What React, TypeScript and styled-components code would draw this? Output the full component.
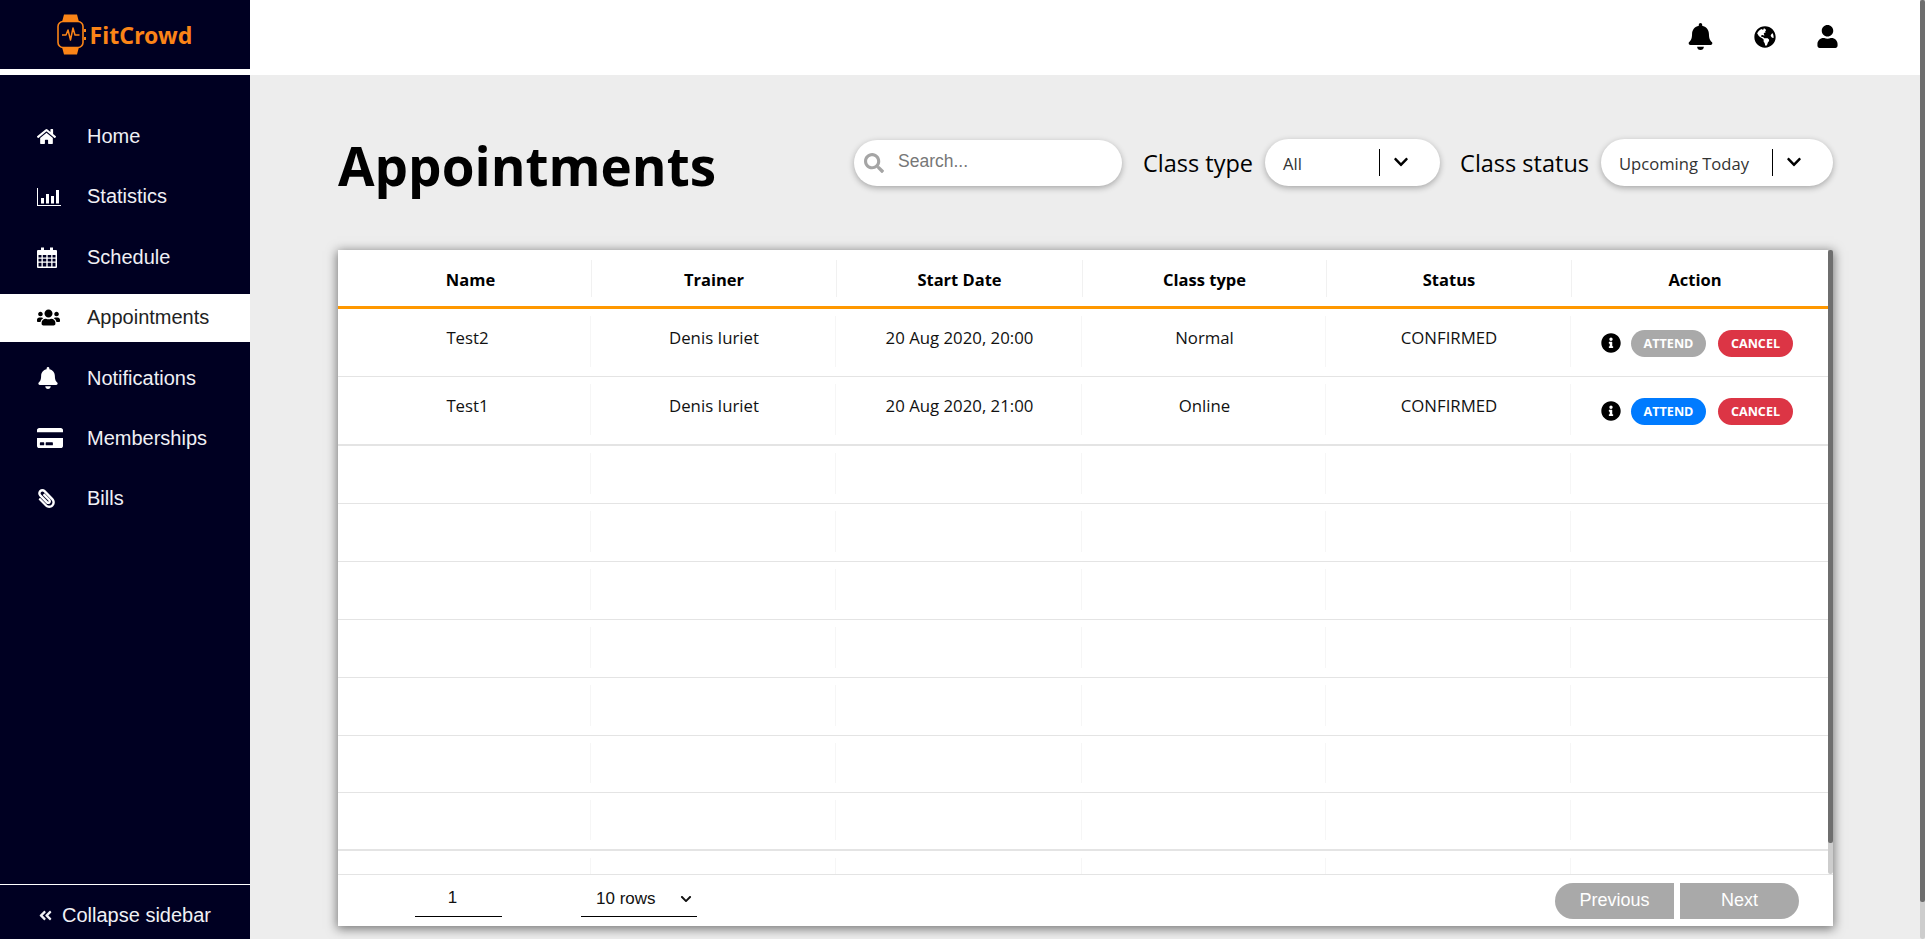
import React from "react";
import styled, { createGlobalStyle } from "styled-components";
import {
	FaHome,
	FaUsers,
	FaBell,
	FaCreditCard,
	FaPaperclip,
	FaGlobeAmericas,
	FaUser,
	FaSearch,
	FaChevronDown,
	FaAngleDoubleLeft,
	FaInfoCircle,
} from "react-icons/fa";

const GlobalStyle = createGlobalStyle`
	* { box-sizing: border-box; }
	html { scrollbar-width: none; }
	body {
		margin: 0;
		background: #ededed;
		font-family: "Open Sans", sans-serif;
		color: #000;
	}
`;

// **LAYOUT
const Page = styled.div`
	display: flex;
	align-items: flex-start;
	min-height: 977px;
	padding-right: 5px;
`;
const Content = styled.div`
	flex: 1;
	min-width: 0;
`;
const Main = styled.main`
	padding: 64px 87px 51px 88px;
`;

// the thin always-visible scrollbars of the page and the table
const ScrollTrack = styled.div<{ $page?: boolean }>`
	position: ${(p) => (p.$page ? "fixed" : "absolute")};
	top: 0;
	right: 0;
	width: 5px;
	height: ${(p) => (p.$page ? "100vh" : "624px")};
	background: #cdcdcd;
	border-radius: 0 0 3px 3px;
`;
const ScrollThumb = styled.div<{ $height: number }>`
	height: ${(p) => p.$height}px;
	background: #6e6e6e;
	border-radius: 2px;
`;

// **SIDEBAR
const Sidebar = styled.aside`
	position: sticky;
	top: 0;
	width: 250px;
	height: 100vh;
	flex: none;
	display: flex;
	flex-direction: column;
	background: #000022;
`;
const LogoBar = styled.div`
	height: 75px;
	flex: none;
	border-bottom: 6px solid #fff;
	display: flex;
	align-items: center;
	justify-content: center;
	gap: 3px;
`;
const LogoText = styled.span`
	padding-top: 1px;
	font-family: "Noto Sans", sans-serif;
	font-weight: 700;
	font-size: 23px;
	line-height: 1;
	letter-spacing: 0.1px;
	color: #fb8417;
`;
const SideNav = styled.nav`
	flex: 1;
	display: flex;
	flex-direction: column;
	gap: 12.4px;
	padding-top: 37.5px;
`;
const SideItem = styled.a<{ $active?: boolean }>`
	height: 48px;
	display: flex;
	align-items: center;
	padding-left: 37px;
	font-family: "Liberation Sans", sans-serif;
	font-size: 20px;
	color: ${(p) => (p.$active ? "#222" : "#f0f0f5")};
	background: ${(p) => (p.$active ? "#fff" : "transparent")};
	svg {
		color: ${(p) => (p.$active ? "#000" : "#fff")};
	}
`;
const SideIcon = styled.span`
	width: 50px;
	flex: none;
	display: flex;
	align-items: center;
`;
const ClipIcon = styled(FaPaperclip)`
	transform: scaleX(-1);
`;
const CollapseRow = styled.div`
	height: 55px;
	flex: none;
	border-top: 1px solid #fff;
	display: flex;
	align-items: center;
	gap: 9px;
	padding: 6px 0 0 38px;
	font-family: "Liberation Sans", sans-serif;
	font-size: 20px;
	color: #f0f0f5;
`;

// **TOP BAR
const TopBar = styled.header`
	height: 75px;
	background: #fff;
	display: flex;
	align-items: center;
	justify-content: flex-end;
	gap: 40px;
	padding: 0 81px 2px 0;
	svg {
		display: block;
	}
`;

// **TOOLBAR
const TitleRow = styled.div`
	display: flex;
	align-items: center;
	height: 47px;
	margin-bottom: 64px;
`;
const PageTitle = styled.h1`
	margin: 0 auto 0 0;
	font-size: 53px;
	font-weight: 700;
	line-height: 1;
	position: relative;
	top: 3px;
`;
const SearchBox = styled.label`
	width: 268px;
	height: 46px;
	margin-right: 21px;
	border-radius: 23px;
	background: #fff;
	box-shadow: 0 2px 6px rgba(0, 0, 0, 0.3);
	display: flex;
	align-items: center;
	gap: 14px;
	padding-left: 10px;
	font-size: 20px;
	color: #a5a5a5;
`;
const SearchInput = styled.input`
	border: none;
	outline: none;
	width: 190px;
	padding: 0 0 2px;
	font-family: "Liberation Sans", sans-serif;
	font-size: 17.5px;
	&::placeholder {
		color: #777;
		opacity: 1;
	}
`;
const FilterLabel = styled.span`
	font-size: 23.5px;
	margin-right: 12px;
	white-space: nowrap;
`;
const SelectBox = styled.div<{ $width: number; $gap?: number }>`
	width: ${(p) => p.$width}px;
	height: 47px;
	margin-right: ${(p) => p.$gap ?? 0}px;
	border-radius: 24px;
	background: #fff;
	box-shadow: 0 2px 6px rgba(0, 0, 0, 0.3);
	display: flex;
	align-items: center;
	padding: 2px 0 0 18px;
	font-size: 16.6px;
	color: #333;
`;
const SelectValue = styled.span`
	flex: 1;
	white-space: nowrap;
`;
const SelectArrow = styled.span`
	width: 61px;
	height: 27px;
	flex: none;
	margin-bottom: 3px;
	border-left: 1.5px solid #000;
	display: flex;
	align-items: center;
	justify-content: center;
	padding: 0 18px 0 0;
	font-size: 16px;
	color: #000;
`;

// **TABLE
const Card = styled.section`
	position: relative;
	width: 1495px;
	background: #fff;
	box-shadow: 0 2px 10px 1px rgba(0, 0, 0, 0.5);
`;
const Scroller = styled.div`
	height: 624px;
	overflow: hidden;
	padding-right: 5px;
`;
const HeadRow = styled.div`
	display: grid;
	grid-template-columns: 254px 245px 246px 244px 245px 1fr;
	height: 59px;
	border-bottom: 3px solid #ff9800;
	padding: 10px 0 9px;
`;
const HeadCell = styled.div`
	display: flex;
	align-items: center;
	justify-content: center;
	padding-top: 1px;
	font-size: 16.5px;
	font-weight: 700;
	border-right: 1px solid #f1f1f1;
	&:first-child {
		padding-left: 12px;
	}
	&:last-child {
		border-right: none;
		padding-right: 10px;
	}
`;
const Row = styled.div<{ $height: number; $thick?: boolean }>`
	display: grid;
	grid-template-columns: 253px 245px 246px 244px 245px 1fr;
	height: ${(p) => p.$height}px;
	border-bottom: ${(p) => (p.$thick ? 2 : 1)}px solid #e4e4e4;
	padding: 7px 0 9px;
`;
const Cell = styled.div`
	display: flex;
	justify-content: center;
	padding: 10px 0 0 2px;
	font-size: 16.8px;
	color: #111;
	border-right: 1px solid #f6f6f6;
	&:first-child {
		padding-left: 7px;
	}
	&:last-child {
		border-right: none;
	}
`;
const ActionCell = styled(Cell)`
	align-items: flex-start;
	gap: 10px;
	padding: 14px 5px 0 0;
	svg {
		display: block;
		margin-top: 3px;
		color: #000;
	}
`;
const Pill = styled.button<{ $color: string }>`
	width: 75px;
	height: 27px;
	border: none;
	border-radius: 14px;
	padding: 0;
	background: ${(p) => p.$color};
	color: #fff;
	font-family: "Open Sans", sans-serif;
	font-size: 12.6px;
	font-weight: 700;
	& + & {
		margin-left: 2px;
	}
`;

// **PAGINATION
const Footer = styled.div`
	height: 52px;
	border-top: 1px solid #e4e4e4;
	display: flex;
	align-items: flex-end;
	padding: 0 34px 9px 77px;
	font-family: "Liberation Sans", sans-serif;
	color: #111;
`;
const PageInput = styled.input`
	width: 87px;
	height: 34px;
	border: none;
	border-bottom: 1px solid #000;
	outline: none;
	padding: 0 12px 3px 0;
	margin-right: 79px;
	text-align: center;
	font-family: inherit;
	font-size: 17px;
	color: #111;
`;
const RowsSelect = styled.div`
	width: 116px;
	height: 34px;
	border-bottom: 1px solid #000;
	display: flex;
	align-items: center;
	justify-content: space-between;
	padding: 0 5px 1px 15px;
	margin-right: auto;
	font-size: 17px;
`;
const PageButton = styled.button<{ $side: "left" | "right" }>`
	width: 119px;
	height: 36px;
	margin: 0 0 -2px ${(p) => (p.$side === "right" ? 6 : 0)}px;
	border: none;
	padding: 0 0 2px;
	background: #a9a9a9;
	color: #fff;
	font-family: inherit;
	font-size: 18px;
	border-radius: ${(p) => (p.$side === "left" ? "18px 0 0 18px" : "0 18px 18px 0")};
`;

// watch outline with the pulse line inside
const WatchLogo = () => (
	<svg width="29" height="41" viewBox="0 0 29 41" fill="none">
		<path d="M5 8 L7 0.5 H20 L22 8 Z M5 33 L7 40.5 H20 L22 33 Z" fill="#fb8417" />
		<rect x="1" y="7.5" width="25" height="26" rx="5" stroke="#fb8417" strokeWidth="1.6" fill="#000022" />
		<path d="M27 15 h2 v3 h-2 Z M27 23 h2 v3 h-2 Z" fill="#fb8417" />
		<path
			d="M5 21 H9 L11 16 L13.5 26 L16 14 L18 21 H22.5"
			stroke="#fb8417"
			strokeWidth="1.5"
			strokeLinejoin="round"
		/>
	</svg>
);

const StatsIcon = () => (
	<svg width="24" height="18" viewBox="0 0 24 18" fill="currentColor">
		<path d="M0 0 H1 V17 H24 V18 H0 Z" />
		<rect x="4" y="10" width="3" height="5.5" />
		<rect x="9" y="6" width="3" height="9.5" />
		<rect x="14" y="8" width="3" height="7.5" />
		<rect x="19" y="2" width="3" height="13.5" />
	</svg>
);

const CalendarIcon = () => (
	<svg width="20" height="21" viewBox="0 0 20 21" fill="currentColor">
		<path
			fillRule="evenodd"
			d="M1 3 H4 V0.5 H7 V3 H13 V0.5 H16 V3 H19 A1 1 0 0 1 20 4 V20 A1 1 0 0 1 19 21 H1 A1 1 0 0 1 0 20 V4 A1 1 0 0 1 1 3 Z
			M1.5 8 V10.5 H4.5 V8 Z M5.8 8 V10.5 H9.3 V8 Z M10.7 8 V10.5 H14.2 V8 Z M15.5 8 V10.5 H18.5 V8 Z
			M1.5 11.8 V14.5 H4.5 V11.8 Z M5.8 11.8 V14.5 H9.3 V11.8 Z M10.7 11.8 V14.5 H14.2 V11.8 Z M15.5 11.8 V14.5 H18.5 V11.8 Z
			M1.5 15.8 V19.5 H4.5 V15.8 Z M5.8 15.8 V19.5 H9.3 V15.8 Z M10.7 15.8 V19.5 H14.2 V15.8 Z M15.5 15.8 V19.5 H18.5 V15.8 Z"
		/>
	</svg>
);

const navItems = [
	{ label: "Home", icon: <FaHome size={19} /> },
	{ label: "Statistics", icon: <StatsIcon /> },
	{ label: "Schedule", icon: <CalendarIcon /> },
	{ label: "Appointments", icon: <FaUsers size={23} />, active: true },
	{ label: "Notifications", icon: <FaBell size={22} /> },
	{ label: "Memberships", icon: <FaCreditCard size={26} /> },
	{ label: "Bills", icon: <ClipIcon size={19} /> },
];

const appointments = [
	{ name: "Test2", date: "20 Aug 2020, 20:00", type: "Normal", canAttend: false },
	{ name: "Test1", date: "20 Aug 2020, 21:00", type: "Online", canAttend: true },
];

const emptyRows = [58, 58, 58, 58, 58, 57, 58, 58];

export default function App() {
	return (
		<>
			<GlobalStyle />
			<Page>
				<Sidebar>
					<LogoBar>
						<WatchLogo />
						<LogoText>FitCrowd</LogoText>
					</LogoBar>
					<SideNav>
						{navItems.map((item) => (
							<SideItem key={item.label} $active={item.active}>
								<SideIcon>{item.icon}</SideIcon>
								{item.label}
							</SideItem>
						))}
					</SideNav>
					<CollapseRow>
						<FaAngleDoubleLeft size={15} />
						Collapse sidebar
					</CollapseRow>
				</Sidebar>
				<Content>
					<TopBar>
						<FaBell size={27} />
						<FaGlobeAmericas size={22} />
						<FaUser size={23} />
					</TopBar>
					<Main>
						<TitleRow>
							<PageTitle>Appointments</PageTitle>
							<SearchBox>
								<FaSearch />
								<SearchInput placeholder="Search..." />
							</SearchBox>
							<FilterLabel>Class type</FilterLabel>
							<SelectBox $width={175} $gap={20}>
								<SelectValue>All</SelectValue>
								<SelectArrow>
									<FaChevronDown />
								</SelectArrow>
							</SelectBox>
							<FilterLabel>Class status</FilterLabel>
							<SelectBox $width={232}>
								<SelectValue>Upcoming Today</SelectValue>
								<SelectArrow>
									<FaChevronDown />
								</SelectArrow>
							</SelectBox>
						</TitleRow>
						<Card>
							<Scroller>
								<HeadRow>
									<HeadCell>Name</HeadCell>
									<HeadCell>Trainer</HeadCell>
									<HeadCell>Start Date</HeadCell>
									<HeadCell>Class type</HeadCell>
									<HeadCell>Status</HeadCell>
									<HeadCell>Action</HeadCell>
								</HeadRow>
								{appointments.map((a, i) => (
									<Row key={a.name} $height={i === 0 ? 68 : 69} $thick={i === 1}>
										<Cell>{a.name}</Cell>
										<Cell>Denis Iuriet</Cell>
										<Cell>{a.date}</Cell>
										<Cell>{a.type}</Cell>
										<Cell>CONFIRMED</Cell>
										<ActionCell>
											<FaInfoCircle size={20} />
											<Pill $color={a.canAttend ? "#007bff" : "#a9a9a9"}>ATTEND</Pill>
											<Pill $color="#dc3545">CANCEL</Pill>
										</ActionCell>
									</Row>
								))}
								{emptyRows.map((h, i) => (
									<Row key={i} $height={h} $thick={i === 6}>
										<Cell />
										<Cell />
										<Cell />
										<Cell />
										<Cell />
										<Cell />
									</Row>
								))}
							</Scroller>
							<ScrollTrack>
								<ScrollThumb $height={593} />
							</ScrollTrack>
							<Footer>
								<PageInput defaultValue="1" />
								<RowsSelect>
									10 rows
									<FaChevronDown size={12} />
								</RowsSelect>
								<PageButton $side="left">Previous</PageButton>
								<PageButton $side="right">Next</PageButton>
							</Footer>
						</Card>
					</Main>
				</Content>
				<ScrollTrack $page>
					<ScrollThumb $height={902} />
				</ScrollTrack>
			</Page>
		</>
	);
}
